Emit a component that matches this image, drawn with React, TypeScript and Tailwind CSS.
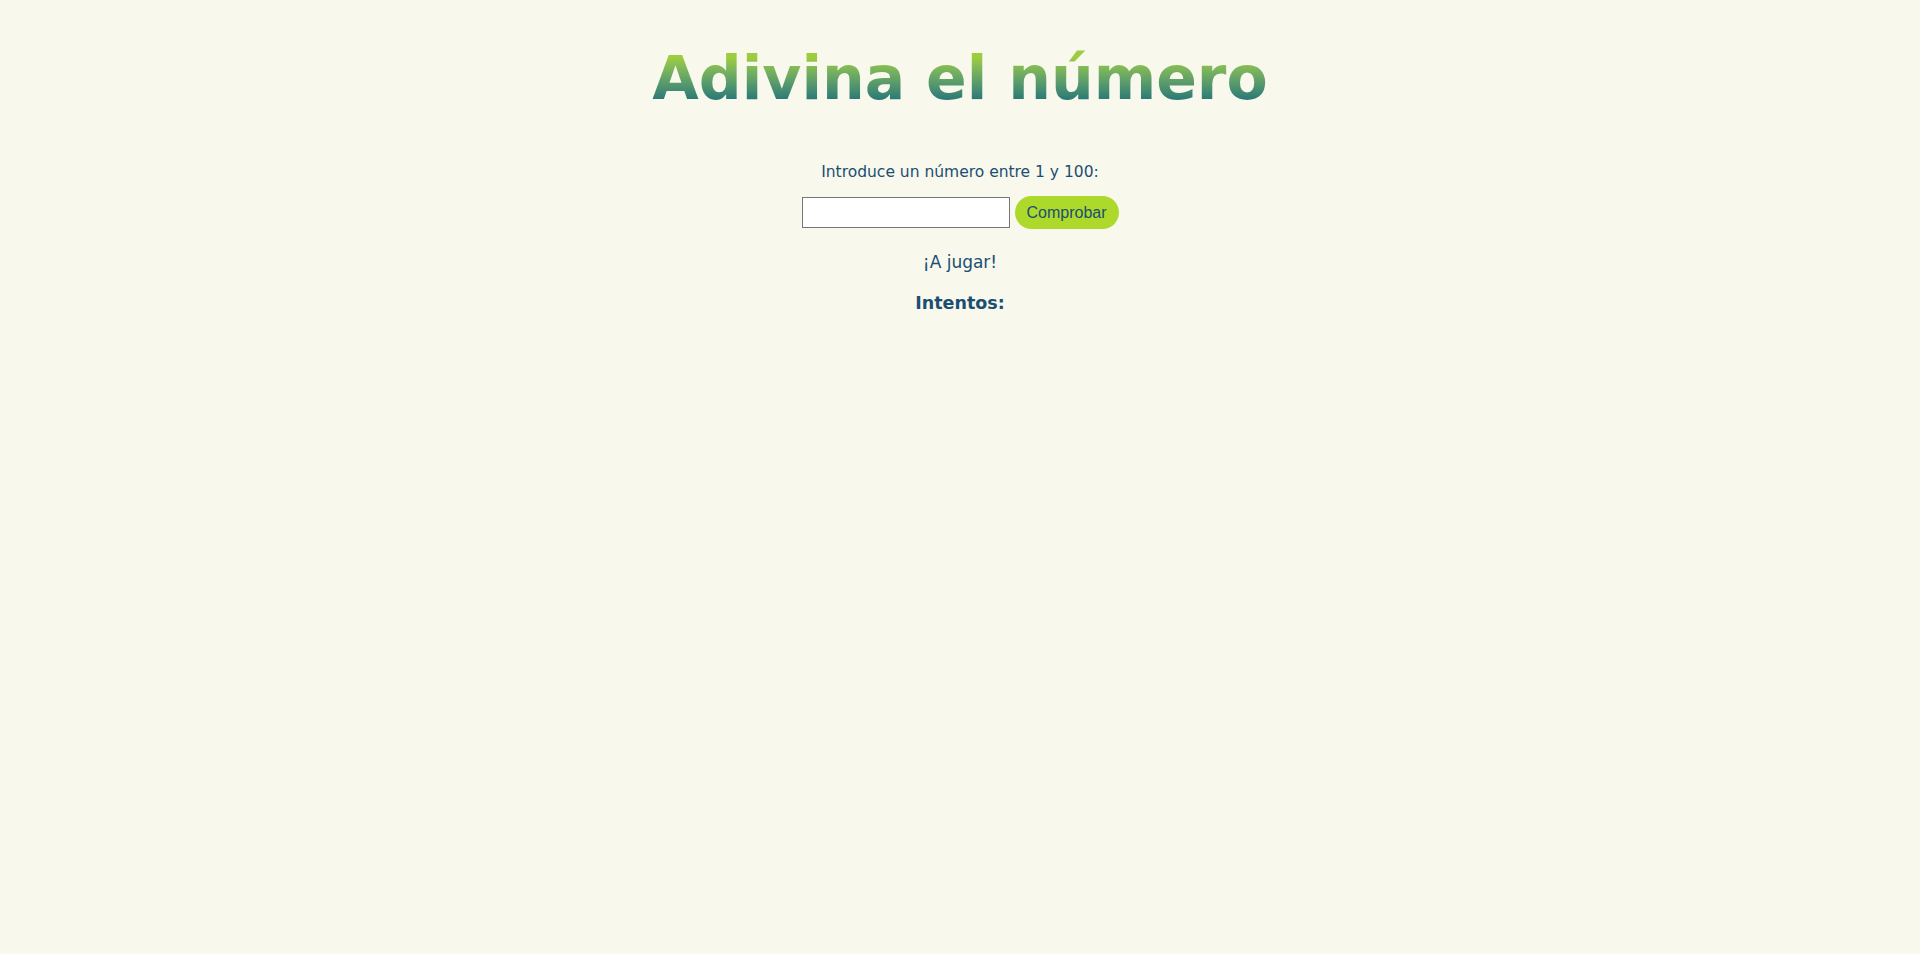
import { useState } from "react";

export default function App() {
  const [guess, setGuess] = useState("");

  return (
    <div className="min-h-[954px] bg-[#f8f8ed] font-['DejaVu_Sans',sans-serif] text-[#1b4f72]">
      <div className="flex flex-col items-center pt-[37px]">
        <h1 className="bg-gradient-to-b from-[#9ccd3e] from-25% to-[#1f7378] to-80% bg-clip-text text-[60px] font-bold leading-[82px] text-transparent">
          Adivina el número
        </h1>

        <p className="mt-[43px] text-[15.5px] leading-[20px]">Introduce un número entre 1 y 100:</p>

        <div className="mt-[14px] flex items-center gap-[5px]">
          <input
            type="number"
            value={guess}
            onChange={(e) => setGuess(e.target.value)}
            className="h-[31px] w-[208px] border border-[#767676] bg-white px-1 text-sm outline-none"
          />
          <button className="h-[33px] w-[104px] rounded-full bg-[#acd92a] font-['Liberation_Sans',sans-serif] text-[16px] text-[#1b4f72]">
            Comprobar
          </button>
        </div>

        <p className="mt-[22px] text-[17px] leading-[22px]">¡A jugar!</p>

        <h3 className="mt-[19px] text-[17.5px] font-bold leading-[22px]">Intentos:</h3>
      </div>
    </div>
  );
}
